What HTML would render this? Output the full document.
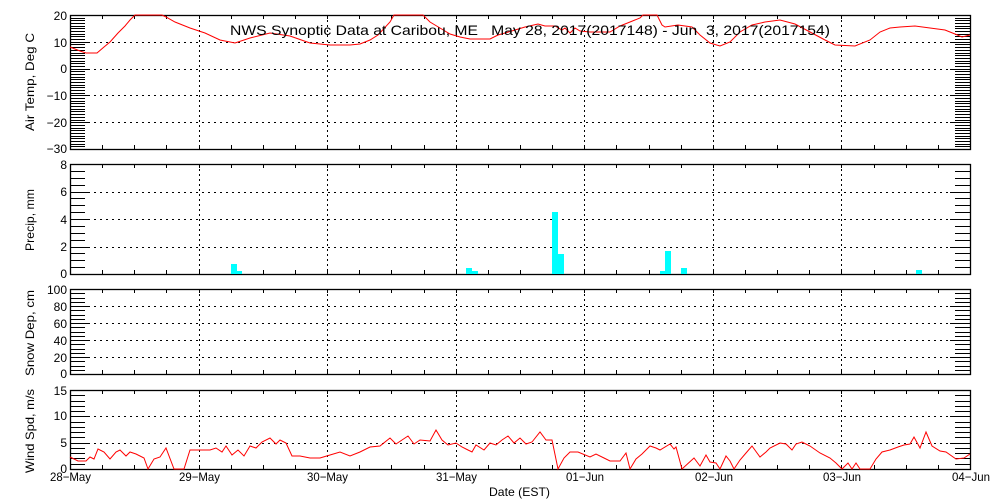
<!DOCTYPE html>
<html><head><meta charset="utf-8"><style>
html,body{margin:0;padding:0;background:#fff;}
svg{display:block;}
text{font-family:"Liberation Sans",sans-serif;font-size:12px;fill:#000;}
</style></head><body>
<svg id="s" width="1000" height="500" xmlns="http://www.w3.org/2000/svg">
<g id="g"></g>
<text x="230" y="35" textLength="600" lengthAdjust="spacingAndGlyphs" style="font-size:14px" xml:space="preserve">NWS Synoptic Data at Caribou, ME   May 28, 2017(2017148) - Jun  3, 2017(2017154)</text>
<g text-anchor="end">
<text x="67" y="20">20</text><text x="67" y="47">10</text><text x="67" y="73">0</text><text x="67" y="100">−10</text><text x="67" y="127">−20</text><text x="67" y="153">−30</text>
<text x="67" y="169">8</text><text x="67" y="196">6</text><text x="67" y="224">4</text><text x="67" y="251">2</text><text x="67" y="278">0</text>
<text x="67" y="294">100</text><text x="67" y="311">80</text><text x="67" y="328">60</text><text x="67" y="345">40</text><text x="67" y="362">20</text><text x="67" y="378">0</text>
<text x="67" y="395">15</text><text x="67" y="420">10</text><text x="67" y="447">5</text><text x="67" y="473">0</text>
</g>
<g>
<text x="50" y="481" textLength="41" lengthAdjust="spacingAndGlyphs">28−May</text>
<text x="179" y="481" textLength="41" lengthAdjust="spacingAndGlyphs">29−May</text>
<text x="307" y="481" textLength="41" lengthAdjust="spacingAndGlyphs">30−May</text>
<text x="436" y="481" textLength="41" lengthAdjust="spacingAndGlyphs">31−May</text>
<text x="566" y="481" textLength="38" lengthAdjust="spacingAndGlyphs">01−Jun</text>
<text x="695" y="481" textLength="38" lengthAdjust="spacingAndGlyphs">02−Jun</text>
<text x="823" y="481" textLength="38" lengthAdjust="spacingAndGlyphs">03−Jun</text>
<text x="952" y="481" textLength="38" lengthAdjust="spacingAndGlyphs">04−Jun</text>
<text x="489" y="496" textLength="61" lengthAdjust="spacingAndGlyphs">Date (EST)</text>
</g>
<g>
<text transform="translate(34,131) rotate(-90)" textLength="98" lengthAdjust="spacingAndGlyphs">Air Temp, Deg C</text>
<text transform="translate(34,251) rotate(-90)" textLength="62" lengthAdjust="spacingAndGlyphs">Precip, mm</text>
<text transform="translate(34,376) rotate(-90)" textLength="86" lengthAdjust="spacingAndGlyphs">Snow Dep, cm</text>
<text transform="translate(34,473) rotate(-90)" textLength="84" lengthAdjust="spacingAndGlyphs">Wind Spd, m/s</text>
</g>
</svg>
<script>
var g=document.getElementById('g'),h='';
function L(x1,y1,x2,y2,extra){h+='<line x1="'+x1+'" y1="'+y1+'" x2="'+x2+'" y2="'+y2+'" stroke="#000" stroke-width="1" '+(extra||'')+'/>';}
var X0=70,X1=970,D=900/7;
var P=[[15,149,-30,20,1,10],[164,274,0,8,0.5,2],[289,374,0,100,5,20],[390,469,0,15,1,5]];
P.forEach(function(p){
 var t=p[0],b=p[1],lo=p[2],hi=p[3];
 function Y(v){return b-(v-lo)/(hi-lo)*(b-t);}
 for(var v=lo;v<=hi+1e-6;v+=p[4]){var y=Math.round(Y(v))+0.5;L(X0,y,X0+15,y);L(X1-15,y,X1,y);}
 for(var v=lo+p[5];v<hi-1e-6;v+=p[5]){var y=Math.round(Y(v))+0.5;L(X0,y,X0+20,y);L(X1-20,y,X1,y);L(X0,y,X1,y,'stroke-dasharray="2,4"');}
 for(var i=1;i<7;i++){var x=Math.round(X0+i*D)+0.5;L(x,t,x,b,'stroke-dasharray="2,3"');}
 for(var i=1;i<28;i++){var x=Math.round(X0+i*D/4)+0.5;L(x,t,x,t+4);L(x,b-4,x,b);}
 h+='<rect x="'+(X0+0.5)+'" y="'+(t+0.5)+'" width="'+(X1-X0)+'" height="'+(b-t)+'" fill="none" stroke="#000" stroke-width="1.3"/>';
});
var bars=[[231,264],[236,271],[466,268],[472,271],[552,212],[558,254],[660,271],[665,251],[681,268],[916,270]];
bars.forEach(function(b){h+='<rect x="'+b[0]+'" y="'+b[1]+'" width="6" height="'+(274-b[1])+'" fill="#00ffff"/>';});
var T=[[70,47],[80,51],[86,53],[97,53],[104,47],[110,42],[118,33],[125,26],[130,20],[135,15],[162,15],[166,17],[175,22],[190,28],[205,33],[220,40],[235,43],[250,38],[270,33],[290,36],[310,43],[330,45],[350,45],[360,44],[370,40],[378,35],[390,22],[394,15],[423,15],[430,22],[440,28],[450,34],[460,37],[470,39],[490,39],[498,35],[505,33],[515,30],[525,27],[538,24],[545,26],[555,26],[562,30],[565,28],[570,33],[575,28],[580,31],[590,32],[610,32],[620,26],[630,22],[640,18],[643,15],[657,15],[662,25],[665,27],[678,25],[692,27],[700,35],[710,43],[720,46],[730,42],[740,32],[752,25],[765,22],[780,20],[795,24],[810,32],[825,40],[835,45],[855,46],[870,40],[880,32],[890,28],[900,27],[915,26],[930,28],[945,30],[955,34],[962,37],[970,35]];
var W=[[70,457],[78,461],[86,461],[90,457],[94,459],[98,449],[104,452],[110,459],[116,452],[120,450],[126,456],[130,452],[136,454],[144,458],[148,469],[154,459],[160,457],[166,448],[174,469],[184,469],[190,450],[210,450],[216,448],[222,452],[226,446],[232,455],[238,450],[244,456],[250,446],[256,448],[262,442],[270,438],[276,444],[280,440],[286,443],[292,456],[300,456],[310,458],[320,458],[330,455],[340,452],[350,456],[360,452],[370,447],[380,446],[390,438],[396,444],[402,440],[408,436],[414,444],[420,440],[430,441],[436,430],[442,440],[448,445],[456,443],[462,447],[468,450],[472,452],[476,445],[484,450],[490,443],[496,445],[502,440],[508,436],[514,443],[520,438],[526,444],[532,442],[540,432],[546,440],[552,440],[558,469],[564,458],[570,452],[578,452],[590,457],[596,454],[604,458],[610,461],[620,461],[626,453],[630,469],[636,459],[642,454],[650,446],[656,448],[660,450],[670,444],[674,449],[676,447],[682,469],[694,458],[700,466],[706,455],[710,462],[716,463],[720,469],[726,456],[730,461],[734,469],[740,460],[746,453],[752,446],[760,457],[766,452],[770,448],[780,443],[786,444],[792,450],[796,444],[802,442],[810,446],[820,453],[830,458],[836,463],[842,469],[848,463],[852,469],[856,463],[860,469],[870,469],[876,459],[882,452],[890,450],[898,447],[904,445],[910,444],[914,437],[920,448],[926,432],[932,446],[940,451],[946,452],[956,459],[964,458],[970,454]];
function PL(a){h+='<polyline fill="none" stroke="#ff0000" stroke-width="1" points="'+a.map(function(p){return p.join(',')}).join(' ')+'"/>';}
PL(T);PL(W);
g.innerHTML=h;
</script>
</body></html>
